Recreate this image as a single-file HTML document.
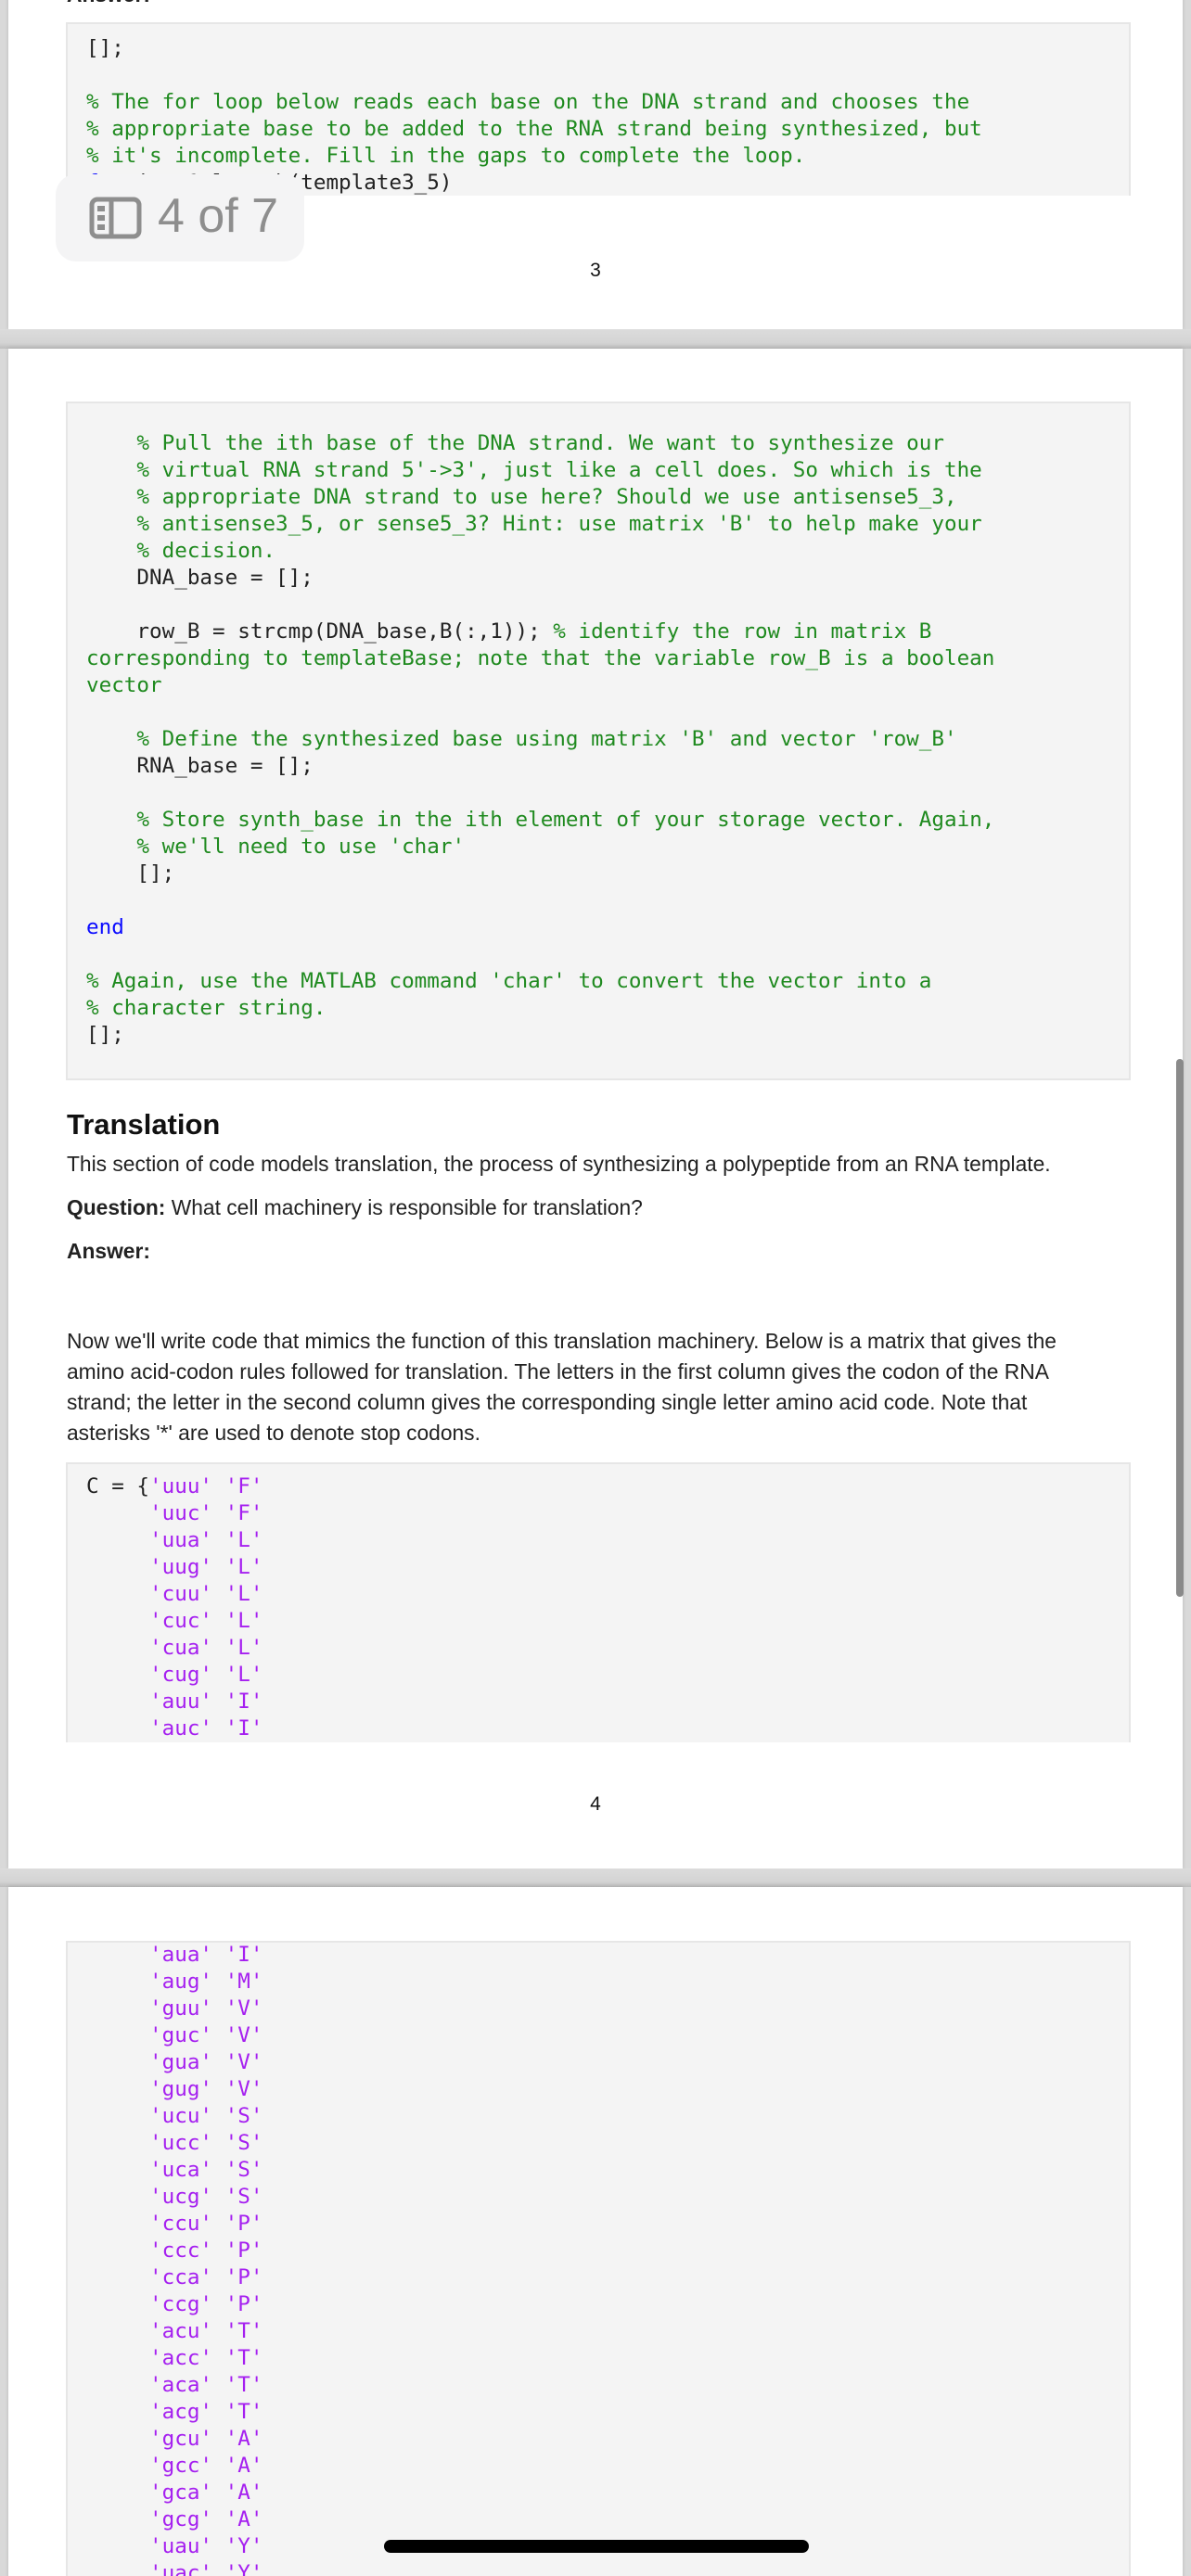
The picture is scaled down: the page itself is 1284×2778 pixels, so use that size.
<!DOCTYPE html>
<html><head><meta charset="utf-8"><style>
*{margin:0;padding:0;box-sizing:border-box}
html,body{width:1284px;height:2778px;overflow:hidden;background:#d9d9d9;position:relative}
.card{position:absolute;left:9px;width:1266px;background:#fff;box-shadow:0 0 4px rgba(0,0,0,.15)}
.gap{position:absolute;left:0;width:1284px;background:linear-gradient(#dcdcdc,#d4d4d4 70%,#bdbdbd)}
.code{position:absolute;left:71px;width:1148px;background:#f4f4f4;border:2px solid #e6e6e6;overflow:hidden}
pre{position:absolute;left:20px;font-family:"DejaVu Sans Mono","Liberation Mono",monospace;font-size:22.6px;line-height:29px;color:#222;white-space:pre}
.c{color:#1f8a1f}.k{color:#0b0bff}.s{color:#a51ff0}
.t{position:absolute;left:72px;font-family:"Liberation Sans",Arial,sans-serif;color:#222;font-size:22.8px;white-space:nowrap}
.pn{position:absolute;left:0;width:1284px;text-align:center;font-family:"Liberation Sans",sans-serif;font-size:21px;color:#111}
</style></head><body>
<div class="card" style="top:-10px;height:365px"></div>
<div class="gap" style="top:355px;height:21px"></div>
<div class="card" style="top:376px;height:1639px"></div>
<div class="gap" style="top:2015px;height:20px"></div>
<div class="card" style="top:2035px;height:760px"></div>

<div class="t" style="top:-19px;font-weight:bold">Answer:</div>

<div class="code" style="top:24px;height:187px;border-bottom:none">
<pre style="top:12px">[];

<span class="c">% The for loop below reads each base on the DNA strand and chooses the
% appropriate base to be added to the RNA strand being synthesized, but
% it's incomplete. Fill in the gaps to complete the loop.</span>
<span class="k">for</span> i = 1:length(template3_5)</pre>
</div>
<div style="position:absolute;left:60px;top:188px;width:268px;height:94px;background:#f4f4f5;border-radius:22px"></div>
<svg style="position:absolute;left:96px;top:212px" width="57" height="46" viewBox="0 0 57 46"><rect x="3" y="3" width="51" height="40" rx="6" fill="none" stroke="#8e8e8e" stroke-width="5"/><line x1="24" y1="3" x2="24" y2="43" stroke="#8e8e8e" stroke-width="5"/><rect x="9" y="10" width="8" height="6" fill="#8e8e8e"/><rect x="9" y="20" width="8" height="6" fill="#8e8e8e"/><rect x="9" y="30" width="8" height="6" fill="#8e8e8e"/></svg>
<div style="position:absolute;left:170px;top:203px;font-family:'Liberation Sans',sans-serif;font-size:52px;line-height:60px;color:#8e8e8e">4 of 7</div>
<div class="pn" style="top:280px">3</div>

<div class="code" style="top:433px;height:732px">
<pre style="top:0px">

    <span class="c">% Pull the ith base of the DNA strand. We want to synthesize our
    % virtual RNA strand 5'-&gt;3', just like a cell does. So which is the
    % appropriate DNA strand to use here? Should we use antisense5_3,
    % antisense3_5, or sense5_3? Hint: use matrix 'B' to help make your
    % decision.</span>
    DNA_base = [];

    row_B = strcmp(DNA_base,B(:,1)); <span class="c">% identify the row in matrix B
corresponding to templateBase; note that the variable row_B is a boolean
vector</span>

    <span class="c">% Define the synthesized base using matrix 'B' and vector 'row_B'</span>
    RNA_base = [];

    <span class="c">% Store synth_base in the ith element of your storage vector. Again,
    % we'll need to use 'char'</span>
    [];

<span class="k">end</span>

<span class="c">% Again, use the MATLAB command 'char' to convert the vector into a
% character string.</span>
[];</pre>
</div>

<div class="t" style="top:1195px;font-size:31px;font-weight:bold;color:#111">Translation</div>
<div class="t" style="top:1242px">This section of code models translation, the process of synthesizing a polypeptide from an RNA template.</div>
<div class="t" style="top:1289px"><b>Question:</b> What cell machinery is responsible for translation?</div>
<div class="t" style="top:1336px;font-weight:bold">Answer:</div>
<div class="t" style="top:1430px;line-height:33px">Now we'll write code that mimics the function of this translation machinery. Below is a matrix that gives the<br>amino acid-codon rules followed for translation. The letters in the first column gives the codon of the RNA<br>strand; the letter in the second column gives the corresponding single letter amino acid code. Note that<br>asterisks '*' are used to denote stop codons.</div>

<div class="code" style="top:1577px;height:302px;border-bottom:none">
<pre style="top:10px">C = {<span class="s">'uuu'</span> <span class="s">'F'</span>
     <span class="s">'uuc'</span> <span class="s">'F'</span>
     <span class="s">'uua'</span> <span class="s">'L'</span>
     <span class="s">'uug'</span> <span class="s">'L'</span>
     <span class="s">'cuu'</span> <span class="s">'L'</span>
     <span class="s">'cuc'</span> <span class="s">'L'</span>
     <span class="s">'cua'</span> <span class="s">'L'</span>
     <span class="s">'cug'</span> <span class="s">'L'</span>
     <span class="s">'auu'</span> <span class="s">'I'</span>
     <span class="s">'auc'</span> <span class="s">'I'</span></pre>
</div>
<div class="pn" style="top:1934px">4</div>
<div style="position:absolute;left:1268px;top:1142px;width:8px;height:580px;background:#8a8a8a;border-radius:4px"></div>

<div class="code" style="top:2093px;height:700px;border-bottom:none">
<pre class="s" style="top:-1px">     'aua' 'I'
     'aug' 'M'
     'guu' 'V'
     'guc' 'V'
     'gua' 'V'
     'gug' 'V'
     'ucu' 'S'
     'ucc' 'S'
     'uca' 'S'
     'ucg' 'S'
     'ccu' 'P'
     'ccc' 'P'
     'cca' 'P'
     'ccg' 'P'
     'acu' 'T'
     'acc' 'T'
     'aca' 'T'
     'acg' 'T'
     'gcu' 'A'
     'gcc' 'A'
     'gca' 'A'
     'gcg' 'A'
     'uau' 'Y'
     'uac' 'Y'</pre>
</div>
<div style="position:absolute;left:414px;top:2739px;width:458px;height:14px;background:#000;border-radius:7px"></div>
</body></html>
